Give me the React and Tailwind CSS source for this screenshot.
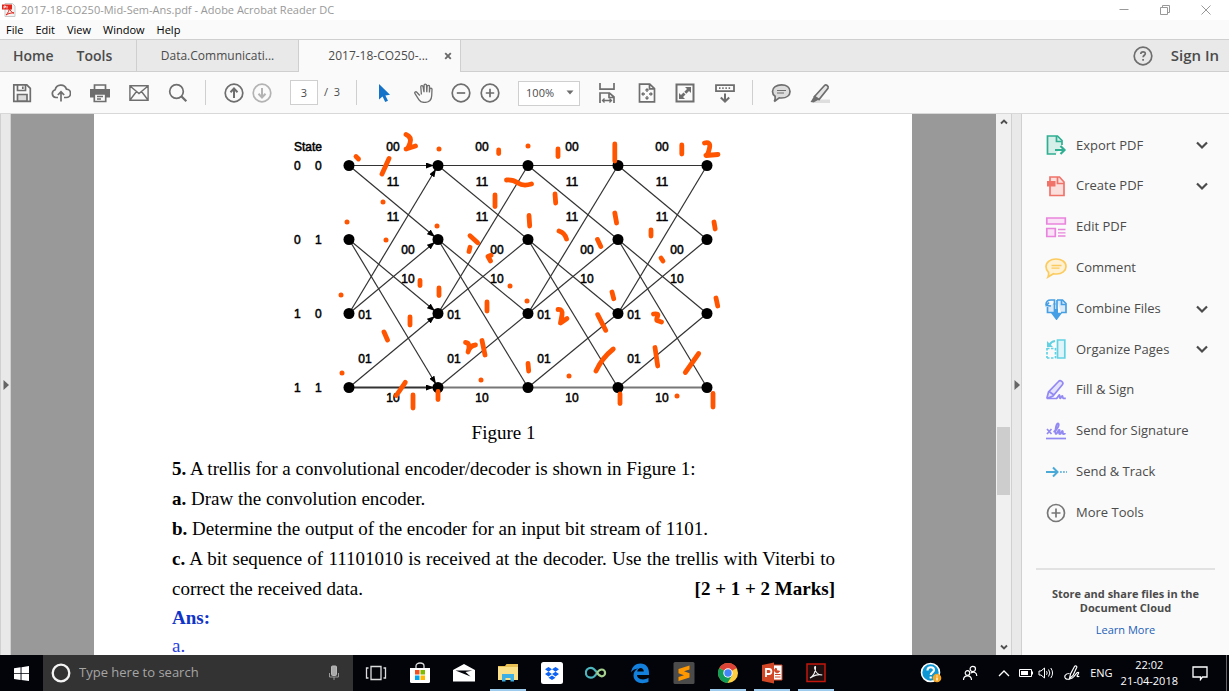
import React from "react";

const Icon = ({ size = "size-5", box = "0 0 20 20", children }) => (
  <svg viewBox={box} className={`${size} shrink-0`} fill="none" stroke="currentColor" strokeWidth="1.7" aria-hidden="true">
    {children}
  </svg>
);

const ToolButton = ({ label, className = "", children }) => (
  <button type="button" aria-label={label} className={`flex size-5 shrink-0 items-center justify-center text-[#6e6e6e] ${className}`}>
    <Icon>{children}</Icon>
  </button>
);

/* ---------- window chrome ---------- */

function TitleBar() {
  return (
    <header className="flex h-5 shrink-0 items-center bg-white pr-[3px] text-[#999]">
      <svg viewBox="0 0 14 14" className="ml-0.5 h-3.5 w-3.5" aria-hidden="true">
        <path d="M3 .5h7.500L13 3v10.500H3z" fill="#f4f4f4" stroke="#c9c9c9" />
        <path d="M0 1.500h10v5H0z" fill="#e0251b" />
        <path d="M4 12c2-2 3.500-5 3.300-7 .7 3 2.500 4.500 4.700 5-2.500-.3-5.500.3-8 2z" fill="none" stroke="#e0251b" />
        <path d="M2 5.500V3h1.500v1.300H2M5 3v2.500" stroke="#fff" strokeWidth=".8" fill="none" />
      </svg>
      <h1 className="ml-[5px] text-[11px] leading-5">2017-18-CO250-Mid-Sem-Ans.pdf - Adobe Acrobat Reader DC</h1>
      <div className="ml-auto flex">
        <button type="button" aria-label="Minimize" className="flex h-5 w-[41px] items-center justify-center">
          <Icon size="size-3" box="0 0 12 12"><path d="M1.500 5.500h9" strokeWidth="1" /></Icon>
        </button>
        <button type="button" aria-label="Restore" className="flex h-5 w-[41px] items-center justify-center">
          <Icon size="size-3" box="0 0 12 12"><path d="M1.500 3.500h7v7h-7zM3.500 3.500v-2h7v7h-2" strokeWidth="1" /></Icon>
        </button>
        <button type="button" aria-label="Close" className="flex h-5 w-[41px] items-center justify-center">
          <Icon size="size-3" box="0 0 12 12"><path d="M1.500 1.500l9 9M10.500 1.500l-9 9" strokeWidth="1" /></Icon>
        </button>
      </div>
    </header>
  );
}

function MenuBar() {
  return (
    <nav className="flex h-[19px] shrink-0 items-center gap-3 bg-[#fafafa] px-1.5 text-[11px] leading-4 text-black">
      {["File", "Edit", "View", "Window", "Help"].map((m) => (
        <button type="button" key={m}>{m}</button>
      ))}
    </nav>
  );
}

function TabBar() {
  return (
    <div className="flex h-[33px] shrink-0 border-t border-[#cfcfcf] bg-[#e9e9e9] text-[#4b4b4b]">
      <div className="flex w-[137px] items-center gap-[23px] border-r border-b border-[#cfcfcf] pl-[13px] text-sm font-semibold">
        <button type="button">Home</button>
        <button type="button">Tools</button>
      </div>
      <button type="button" className="w-[162px] border-r border-b border-[#cfcfcf] text-xs">Data.Communicati...</button>
      <div className="flex w-[162px] items-center justify-end border-r border-[#cfcfcf] bg-[#fafafa] pr-2 text-xs">
        <button type="button">2017-18-CO250-...</button>
        <button type="button" aria-label="Close tab" className="ml-4 text-[#6a6a6a]">
          <Icon size="size-2" box="0 0 8 8"><path d="M1.200 1.200l5.600 5.600M6.800 1.200L1.200 6.800" strokeWidth="1.900" /></Icon>
        </button>
      </div>
      <div className="flex grow items-center justify-end gap-[18px] border-b border-[#cfcfcf] pr-2.5">
        <button type="button" aria-label="Help" className="text-[#6e6e6e]">
          <Icon>
            <circle cx="10" cy="10" r="8.800" />
            <path d="M7.800 8c0-3 4.600-2.800 4.500-.3 0 1.500-2.200 1.700-2.200 3.600M10.100 12.900v1.800" />
          </Icon>
        </button>
        <button type="button" className="text-[15px] font-semibold">Sign In</button>
      </div>
    </div>
  );
}

function Toolbar() {
  return (
    <div className="flex h-[42px] shrink-0 items-center border-b border-[#d8d8d8] bg-[#fafafa] text-[#4b4b4b]">
      <div className="flex h-[25px] items-center gap-[19px] border-r border-[#cfcfcf] pr-[17px] pl-3">
        <ToolButton label="Save">
          <path d="M1.800 1.800h13l3.500 3.500v13H1.800z" />
          <path d="M5.500 2v5.500h8V2M10.800 3.500v2.500" />
          <path d="M5.500 18v-6.500h9.500V18z" fill="#dcdcdc" />
        </ToolButton>
        <ToolButton label="Upload to cloud">
          <path d="M7 14.500H4.800a4 4 0 0 1-.6-7.800 5.800 5.800 0 0 1 11.200-.6 4.200 4.200 0 0 1-.2 8.400H13M10 18.500V9M6.800 12L10 8.800l3.200 3.200" />
        </ToolButton>
        <ToolButton label="Print">
          <path d="M4.500 6V2h11v4" />
          <path d="M0 6h20v8.500h-4v-3H4v3H0z" fill="currentColor" stroke="none" />
          <path d="M4.300 11h11.400v7.500H4.300z" fill="#fafafa" />
          <path d="M7 13.500h6M7 16h4" strokeWidth="1.300" />
        </ToolButton>
        <ToolButton label="Email">
          <path d="M.9 2.800h18.200v14.400H.9zM1 3l9 7.500L19 3M1 17l6.500-8.500M19 17l-6.500-8.500" strokeWidth="1.400" />
        </ToolButton>
        <ToolButton label="Find">
          <circle cx="8.500" cy="8.500" r="6.800" />
          <path d="M13.300 13.300l5 5" strokeWidth="2.300" />
        </ToolButton>
      </div>
      <div className="flex h-[25px] items-center border-r border-[#cfcfcf] pr-4 pl-[18px]">
        <ToolButton label="Previous page">
          <circle cx="10" cy="10" r="8.800" />
          <path d="M10 15V6M6.500 9.200L10 5.500l3.500 3.700" strokeWidth="2" />
        </ToolButton>
        <ToolButton label="Next page" className="ml-2 opacity-50">
          <circle cx="10" cy="10" r="8.800" />
          <path d="M10 5v9M6.500 10.800l3.500 3.700 3.500-3.700" strokeWidth="2" />
        </ToolButton>
        <input aria-label="Page number" defaultValue="3" className="ml-[18px] h-[25px] w-7 border border-[#cfcfcf] bg-white text-center text-[11px]" />
        <span className="ml-1.5 text-[11px] whitespace-pre">/  3</span>
      </div>
      <div className="flex h-[25px] items-center border-r border-[#cfcfcf] px-[17px]">
        <ToolButton label="Select">
          <path d="M5 1v15.500l3.600-3 2.600 5.500 2.800-1.300-2.600-5.300 4.600-.6z" fill="#1473c9" stroke="none" />
        </ToolButton>
        <ToolButton label="Hand" className="ml-5">
          <path d="M5.800 12.500L2.800 9.200c-1-1-2.600.2-1.800 1.400l4 6.200c1.200 1.900 2.800 2.600 5.500 2.600 4.500 0 7-2.600 7.200-6.700l.3-6.500c0-1.500-2.100-1.500-2.300-.1l-.3 3.400.1-6c0-1.600-2.400-1.600-2.400 0l-.3 5.800-.3-7c0-1.600-2.400-1.600-2.400 0l-.1 6.900-.9-5.600C8.800 2.100 6.600 2.400 6.800 4l.6 7.500" strokeWidth="1.300" />
        </ToolButton>
        <ToolButton label="Zoom out" className="ml-[17px]">
          <circle cx="10" cy="10" r="8.800" /><path d="M5.800 10h8.400" />
        </ToolButton>
        <ToolButton label="Zoom in" className="ml-[9px]">
          <circle cx="10" cy="10" r="8.800" /><path d="M5.800 10h8.400M10 5.800v8.400" />
        </ToolButton>
        <div className="relative ml-[18px]">
          <select aria-label="Zoom level" className="h-[25px] w-[62px] appearance-none border border-[#cfcfcf] bg-white pl-[7px] text-[11px]">
            <option>100%</option>
          </select>
          <svg viewBox="0 0 8 5" className="pointer-events-none absolute top-[11px] right-1.5 h-[5px] w-2" aria-hidden="true"><path d="M.5.500h7L4 4.500z" fill="#6e6e6e" /></svg>
        </div>
        <ToolButton label="Fit width" className="ml-[17px]">
          <path d="M3 0v6.200h14V0M3 20v-10h9.500l4.500 4V20M12 10v4.500h5" />
          <path d="M5.500 17.500h9M7.500 15.500l-2 2 2 2M12.500 15.500l2 2-2 2" strokeWidth="1.300" />
        </ToolButton>
        <ToolButton label="Fit page" className="ml-5">
          <path d="M2.500 1.200h10.300l4.700 4.300v13.300h-15zM12.500 1.200v4.600h5" />
          <path d="M10 6v3M10 13v3M5 11h3M12 11h3" strokeWidth="1.300" />
          <path d="M8.500 7.500L10 6l1.500 1.500M8.500 14.500l1.500 1.500 1.500-1.500M6.500 9.500L5 11l1.500 1.500M13.500 9.500L15 11l-1.500 1.500" strokeWidth="1.300" />
        </ToolButton>
        <ToolButton label="Full screen" className="ml-[18px]">
          <path d="M1.500 1.500h17v17h-17z" strokeWidth="2" />
          <path d="M10 4h6v6l-2-2-2.700 2.700-2-2L12 6zM10 16H4v-6l2 2 2.500-2.500 2 2L8 14z" fill="currentColor" stroke="none" />
        </ToolButton>
        <ToolButton label="Scrolling mode" className="ml-5">
          <path d="M1 2.200h18v6H1z" strokeWidth="1.800" />
          <path d="M4 5.200h12" strokeDasharray="1.500 1.700" />
          <path d="M10 10.500v8M5.800 14.500l4.200 4 4.200-4" strokeWidth="2" />
        </ToolButton>
      </div>
      <div className="flex h-[25px] items-center gap-[19px] pl-[18px]">
        <ToolButton label="Add comment">
          <path d="M10.500 1.800c5 0 8.500 2.600 8.500 6.600s-3.500 6.600-8.500 6.600c-.9 0-1.500 0-2.300-.2L3.300 18.500c.8-1.400 1.100-3 .8-5.200C2.300 12 1.500 10.300 1.500 8.400c0-4 4-6.600 9-6.600z" fill="#dcdcdc" />
          <path d="M6 7.500h9M6 10h7" strokeWidth="1.200" />
        </ToolButton>
        <ToolButton label="Highlight">
          <path d="M6 16.500h14v3.500H3z" fill="#dedede" stroke="none" />
          <path d="M4.500 13.500L14.500 2.500c1.500-1.500 4.500.5 3.500 2.700L9 16.500z" fill="#e4e4e4" />
          <path d="M4.500 12.500L.5 19l3 .5 5.500-3z" fill="currentColor" stroke="none" />
        </ToolButton>
      </div>
    </div>
  );
}

/* ---------- document ---------- */

const COLS = [349, 438, 528, 618, 707];
const ROWS = [165, 239, 313, 387];
const EDGES = [[0, 0], [0, 1], [1, 2], [1, 3], [2, 0], [2, 1], [3, 2], [3, 3]];
const LABELS = [
  ["00", 44, 151], ["11", 44, 186], ["11", 44, 221], ["00", 59, 254],
  ["10", 59, 283], ["01", 16, 319], ["01", 16, 363], ["10", 44, 402],
];
const STATES = [["0", "0"], ["0", "1"], ["1", "0"], ["1", "1"]];
const DOTS = [
  [439, 149], [383, 202], [347, 222], [386, 240], [437, 226], [528, 146], [341, 295],
  [342, 373], [481, 380], [510, 286], [527, 301], [569, 376], [677, 396],
];
const STROKES = [
  "M406 134.500Q412 137 410 143T406 149L415.500 146", "M356 156.500l2.500 2.500", "M389 158.500L382 174",
  "M498.700 150v3.500", "M495 195v11.500", "M470 235.700l7.700 7", "M470 247.300l-1 4.200", "M491 255.300l-3 1.200 2.500 4.500",
  "M558 149v7.500", "M614.800 144v17", "M681.800 145v9", "M704.500 143Q711 141.500 709.500 148T706 155.500L718 154.500",
  "M506.500 180Q513 179.500 518 183T531.500 184", "M555 194l.7 9", "M529 215.500l.7 10.500", "M559 231Q565 233 566.500 239",
  "M614.800 213l1.800 10", "M597.500 239.500l3.300 7", "M651 230v6", "M661 258l2 3", "M714 222l1.200 7",
  "M420 280.500v5", "M439 288v7.500", "M487 302v9", "M410 317v8", "M384 332l3.500 8", "M405.300 382.300L396.300 395.500",
  "M413 395v13", "M438 391.500v8", "M465.500 342.500Q471 343 468 352Q470 345.500 475.500 345", "M482 340.500L485 355",
  "M558 309.500Q563 309 562 315L560.500 323L567 318.500", "M612 292l1.700 6.700", "M597.700 314.700l8 15.600",
  "M653.500 314Q659 313 657.500 316.500T657 320.500L661.500 322", "M716 298l1.700 8", "M528 363.500l.7 7.500",
  "M613.300 349Q602 358 596 371", "M655 347.500l2.700 18.500", "M698.700 353.500L685.300 372.500", "M620 394v9.500", "M713 393.500v13.500",
];

function Trellis() {
  const edges = [];
  for (let c = 0; c < 4; c++) {
    EDGES.forEach(([from, to]) => {
      edges.push(
        <line
          key={`${c}${from}${to}`}
          x1={COLS[c]} y1={ROWS[from] + 0.5} x2={COLS[c + 1]} y2={ROWS[to] + 0.5}
          stroke={from === 3 && to === 3 && c > 0 ? "#777" : "#333"}
          strokeWidth={from === 3 && to === 3 ? 2 : 1.2}
          markerEnd={c === 0 ? "url(#arrow)" : undefined}
        />
      );
    });
  }
  return (
    <svg viewBox="94 114 818 300" className="w-full max-w-[818px]" role="img" aria-label="Trellis diagram">
      <defs>
        <marker id="arrow" viewBox="0 0 8 6" markerWidth="8" markerHeight="6" refX="12" refY="3" orient="auto" markerUnits="userSpaceOnUse">
          <path d="M0 0l8 3-8 3z" fill="#000" />
        </marker>
      </defs>
      {edges}
      {COLS.map((x) => ROWS.map((y) => <circle key={`${x}${y}`} cx={x} cy={y + 0.5} r="5.500" fill="#000" />))}
      <g fill="#000" stroke="#000" strokeWidth=".5" fontSize="12" fontFamily="'Liberation Sans', Arial, sans-serif">
        <text x="294" y="151">State</text>
        {STATES.map(([a, b], i) => (
          <React.Fragment key={i}>
            <text x="294" y={ROWS[i] + 5}>{a}</text>
            <text x="315" y={ROWS[i] + 5}>{b}</text>
          </React.Fragment>
        ))}
        {COLS.slice(0, 4).map((x) =>
          LABELS.map(([t, dx, y]) => (
            <text key={`${x}${y}`} x={x + dx} y={y} textAnchor="middle">{t}</text>
          ))
        )}
      </g>
      <g fill="none" stroke="#ff5500" strokeWidth="4.800" strokeLinecap="round" strokeLinejoin="round">
        {STROKES.map((d) => <path key={d} d={d} />)}
      </g>
      {DOTS.map(([x, y]) => <circle key={`${x}-${y}`} cx={x} cy={y} r="2.500" fill="#ff5500" />)}
    </svg>
  );
}

function Page() {
  return (
    <article className="w-full max-w-[818px] overflow-hidden bg-white font-['Liberation_Serif',serif] text-[19px] leading-[30px] text-black">
      <Trellis />
      <div className="pr-[77px] pl-[78px]">
        <p className="mt-1 mb-1.5 text-center">Figure 1</p>
        <p><b>5.</b> A trellis for a convolutional encoder/decoder is shown in Figure 1:</p>
        <p><b>a.</b> Draw the convolution encoder.</p>
        <p><b>b.</b> Determine the output of the encoder for an input bit stream of 1101.</p>
        <p className="text-justify [text-align-last:justify]"><b>c.</b> A bit sequence of 11101010 is received at the decoder. Use the trellis with Viterbi to</p>
        <p className="flex justify-between"><span>correct the received data.</span><b>[2 + 1 + 2 Marks]</b></p>
        <p className="leading-7 font-bold text-[#1034c8]">Ans:</p>
        <p className="leading-7 text-[#2a3fe0]">a.</p>
      </div>
    </article>
  );
}

function Scrollbar() {
  return (
    <div className="flex w-[15px] shrink-0 flex-col items-center bg-[#f0f0f0] text-[#505050]">
      <button type="button" aria-label="Scroll up" className="flex h-4 items-center">
        <Icon size="size-2" box="0 0 8 8"><path d="M1 5.500l3-3 3 3" strokeWidth="1.900" /></Icon>
      </button>
      <div className="grow-[297]" />
      <div className="h-[68px] w-[13px] bg-[#cdcdcd]" />
      <div className="grow-[144]" />
      <button type="button" aria-label="Scroll down" className="flex h-4 items-center">
        <Icon size="size-2" box="0 0 8 8"><path d="M1 2.500l3 3 3-3" strokeWidth="1.900" /></Icon>
      </button>
    </div>
  );
}

const PaneToggle = ({ label }) => (
  <button type="button" aria-label={label} className="flex w-[11px] shrink-0 items-center justify-center border-x border-[#d0d0d0] bg-[#e9e9e9]">
    <svg viewBox="0 0 6 10" className="h-2.5 w-1.5" aria-hidden="true"><path d="M.5 0v10L6 5z" fill="#666" /></svg>
  </button>
);

/* ---------- tools pane ---------- */

const TOOLS = [
  ["Export PDF", true, "text-[#2fae91]", <>
    <path d="M11 20H2.500V2h10L17 6.500V11" fill="#d7efe9" /><path d="M11.500 2v5.500H17" />
    <path d="M10 16h9M15.500 12l4 4-4 4" strokeWidth="2.200" />
  </>],
  ["Create PDF", true, "text-[#f0736a]", <>
    <path d="M5 10v10.500h14V7l-4.500-5H5v4" fill="#fbdfdc" /><path d="M12.500 2v6.500H19" />
    <path d="M2 6h8.500v5.500H2z" fill="currentColor" stroke="none" />
  </>],
  ["Edit PDF", false, "text-[#e985dd]", <>
    <path d="M1.800 2h18.500v6H1.800zM1.800 12.500h8.500v8H1.800z" fill="#fae3f7" />
    <path d="M13 13.500h7.500M13 16.800h7.500M13 20h7.500" strokeWidth="1.300" />
  </>],
  ["Comment", false, "text-[#fbcb5f]", <>
    <path d="M11 2c5.500 0 10 3 10 7.500S17 17 11.500 17c-1 0-2 0-3-.3L3 20c.6-1.500.8-3 .5-4.700C1.800 13.800 1 12 1 9.700 1 5 5.500 2 11 2z" fill="#fff1d3" />
    <path d="M6.500 8.500h10M6.500 11.200h8" strokeWidth="1.300" />
  </>],
  ["Combine Files", true, "text-[#459fe4]", <>
    <path d="M9.500 5v9.500H2.500V9M12 2h5.500L21 5.500v9h-5" fill="#dbeaf8" />
    <path d="M1 7c0-3 2-5 5-5h3.500v5M4 4.500L1.500 7.500 6 8M12 14V2M16.500 2v4.500H21" />
    <path d="M7.500 15.500h8L11.500 21z" fill="currentColor" /><path d="M11.500 11v7" strokeWidth="3" />
  </>],
  ["Organize Pages", true, "text-[#62d2e3]", <>
    <path d="M12.500 2h7.300v18h-7.300z" fill="#dff5f9" />
    <path d="M2 10.500h8.500M2 20h8.500M2 10v10M10.500 10v10" strokeDasharray="2.500 1.500" />
    <path d="M2 3v6h6z" fill="currentColor" stroke="none" /><path d="M4.500 7Q6 3.500 10 3" strokeWidth="2" />
  </>],
  ["Fill & Sign", false, "text-[#9289f3]", <>
    <path d="M1.800 19.500L3.500 13 13.500 2.500c1.800-2 5.500.8 4 3L8 17l-6.200 2.500h9.700" fill="#e5e2fd" />
    <path d="M11 19.500c2 0 2.500-4 3.500-3.500s-.5 3.500.8 3.300 1-2.700 2-2.500 0 2.500 1 2.500h2.500M4 12.500l5 3.500" />
  </>],
  ["Send for Signature", false, "text-[#9289f3]", <>
    <path d="M1 18.500h20" /><path d="M2 9l4.500 5M6.500 9L2 14" />
    <path d="M8.500 12c4-2 6.500-8 4.500-8.500S9.500 14 11 14s2.500-5 3.500-4-1.500 4 .3 4 1.700-3.500 2.700-3-.5 3 1 3 1.500-1 1.500-1" strokeWidth="1.900" />
  </>],
  ["Send & Track", false, "text-[#4ba9d8]", <>
    <path d="M1 11h11M8 6.500l4.500 4.500L8 15.500" strokeWidth="2" /><path d="M15 11h7" strokeDasharray="1.800 1.200" strokeWidth="1.500" />
  </>],
  ["More Tools", false, "text-[#777]", <>
    <circle cx="11" cy="11" r="8.500" /><path d="M11 6.500v9M6.500 11h9" />
  </>],
];

function ToolsPane() {
  return (
    <aside className="w-[207px] shrink-0 bg-[#fafafa] pt-[11px] text-[#4b4b4b]">
      <ul className="flex h-[408px] flex-col">
        {TOOLS.map(([name, expandable, color, art]) => (
          <li key={name} className="flex flex-1 items-center pr-5 pl-[23px] text-[13px]">
            <button type="button" className="flex items-center gap-[9px]">
              <span className={color}><Icon size="size-[22px]" box="0 0 22 22">{art}</Icon></span>
              {name}
            </button>
            {expandable && (
              <button type="button" aria-label={`Expand ${name}`} className="ml-auto">
                <Icon size="size-3.5" box="0 0 14 14"><path d="M2 4.500l5 5 5-5" strokeWidth="2.200" /></Icon>
              </button>
            )}
          </li>
        ))}
      </ul>
      <hr className="mx-3.5 mt-[35px] border-t-2 border-[#e2e2e2]" />
      <div className="mt-[17px] text-center text-[11px] leading-[14px]">
        <p className="font-bold">Store and share files in the<br />Document Cloud</p>
        <a href="#learn" className="mt-2 block text-[#1c5fb8]">Learn More</a>
      </div>
    </aside>
  );
}

/* ---------- taskbar ---------- */

const APPS = [
  ["Task view", false, <path d="M6 4.500h10v13H6zM3.500 6H1.500v10h2M18.500 6h2v10h-2" stroke="#ddd" strokeWidth="1.300" fill="none" />],
  ["Store", false, <>
    <path d="M7 6V4c0-4 8-4 8 0v2" fill="none" stroke="#ddd" strokeWidth="1.300" />
    <path d="M1 6h20v13.500a1.500 1.500 0 0 1-1.500 1.500h-17A1.500 1.500 0 0 1 1 19.500z" fill="#fff" />
    <path d="M6 8h4.500v4.500H6z" fill="#f25022" /><path d="M11.500 8H16v4.500h-4.500z" fill="#7fba00" />
    <path d="M6 13.500h4.500V18H6z" fill="#00a4ef" /><path d="M11.500 13.500H16V18h-4.500z" fill="#ffb900" />
  </>],
  ["Mail", false, <path d="M0 8l11-6 11 6v11.500H0zM2.500 8.500l15 6-5-4.500 7-1.500z" fill="#fff" fillRule="evenodd" />],
  ["File Explorer", true, <>
    <path d="M1 4h7l1.500-2H21v16H1z" fill="#e8bf52" /><path d="M1 5h20v13H1z" fill="#fbe08a" />
    <path d="M5 19.500V12h12v7.500h-3.500V16h-5v3.500z" fill="#3cb0e5" />
  </>],
  ["Dropbox", false, <>
    <rect width="22" height="22" rx="2.500" fill="#fff" />
    <path d="M7.500 5l3.500 2.300-3.500 2.400L4 7.300zM14.500 5L18 7.300l-3.500 2.400L11 7.300zM7.500 9.800l3.500 2.300-3.500 2.400L4 12.100zM14.500 9.800l3.500 2.300-3.500 2.400-3.500-2.400zM11 13.500l3.500 2.200L11 18l-3.500-2.300z" fill="#0c62f5" />
  </>],
  ["Infinity", false, <>
    <path d="M12 10.500C9.500 7 8 5.800 5.800 5.800a4.700 4.700 0 0 0 0 9.900c3 0 4.500-1.900 6.200-4.700" fill="none" stroke="#4db5bd" strokeWidth="2.200" />
    <path d="M12 11c1.500-2.500 3-3.500 4.700-3.500a3.400 3.400 0 0 1 0 6.800c-1.700 0-3.200-1.300-4.700-3.800" fill="none" stroke="#a5d08d" strokeWidth="2.200" />
  </>],
  ["Edge", false, <path d="M2 10.500C3 4.500 6.500 1.500 11.500 1.500c5.500 0 8.500 4 8.500 9.500v2H8c.3 5 7.500 5.500 11.500 2.800v3.900C13 23 4.500 20.500 4.500 13.500c0-3.500 2-5.800 4.800-7C5.500 6.700 3.300 8.500 2 10.500zM8.200 9.500h6.600c0-4.800-6-4.800-6.600 0z" fill="#1280dc" />],
  ["Sublime Text", false, <>
    <rect x=".5" y="0" width="21" height="22" rx="1.500" fill="#4b4b4b" />
    <path d="M16.500 3.500v4L11 9.300l5.500 1.900v4.300L5.500 19v-4l5.500-1.800-5.500-2V7z" fill="#ff9800" />
  </>],
  ["Chrome", true, <>
    <circle cx="11" cy="11" r="10" fill="#ffcd42" />
    <path d="M11 11L2.300 6A10 10 0 0 1 19.700 6z" fill="#db4437" />
    <path d="M2.300 6A10 10 0 0 0 10.500 21L15 13.500 11 11z" fill="#0f9d58" />
    <circle cx="11" cy="11" r="4.700" fill="#fff" /><circle cx="11" cy="11" r="3.700" fill="#4285f4" />
  </>],
  ["PowerPoint", true, <>
    <path d="M12 3h9v15h-9z" fill="#fff" stroke="#d24726" />
    <path d="M14 12.500h5.500M14 15h5.500M15 6a2.500 2.500 0 1 0 3.500 3H16z" stroke="#d24726" fill="#d24726" />
    <path d="M1 3l12-2.500v21L1 19z" fill="#d24726" />
    <path d="M5 15V7h3c3.200 0 3.200 5 0 5H5.500" fill="none" stroke="#fff" strokeWidth="1.800" />
  </>],
  ["Acrobat Reader", true, <>
    <path d="M2 2h18v17.500H2z" fill="#1d0f10" stroke="#c3160c" strokeWidth="1.500" />
    <path d="M5 16c3-1.500 6-6 5.500-11-.1-1-1.200-.5-.8 1.500.7 3.500 3.500 6.500 7.500 6.500-3.500-1.300-9 .5-12.200 3z" fill="none" stroke="#f0f0f0" strokeWidth="1.200" />
  </>],
];

function Taskbar() {
  return (
    <footer className="flex h-9 shrink-0 items-stretch bg-[#02040a] text-[11px] text-white">
      <button type="button" aria-label="Start" className="flex w-[43px] items-center justify-center">
        <svg viewBox="0 0 16 16" className="size-[15px]" aria-hidden="true"><path d="M0 2.300l7-1v6.300H0zM8 1.200L16 0v7.600H8zM0 8.500h7v6.300l-7-1zM8 8.500h8V16l-8-1.200z" fill="#fff" /></svg>
      </button>
      <label className="flex w-[310px] items-center bg-[#333] pr-[13px] pl-2">
        <svg viewBox="0 0 20 20" className="size-5" aria-hidden="true"><circle cx="10" cy="10" r="8.300" fill="none" stroke="#f4f4f4" strokeWidth="2.300" /></svg>
        <input aria-label="Search" placeholder="Type here to search" className="ml-2 min-w-0 grow bg-transparent text-[13px] placeholder:text-[#a5a5a5]" />
        <svg viewBox="0 0 12 16" className="h-4 w-3" aria-hidden="true">
          <rect x="3.500" y="1" width="5" height="9.500" rx="1" fill="#aaa" stroke="#bbb" /><path d="M1.500 8v4h9V8M6 12v3" fill="none" stroke="#999" />
        </svg>
      </label>
      <div className="ml-px flex">
        {APPS.map(([name, open, art]) => (
          <button type="button" key={name} aria-label={name} className="flex w-11 flex-col items-center">
            <svg viewBox="0 0 22 22" className="mt-[7px] size-[22px]" aria-hidden="true">{art}</svg>
            {open && <span className="mt-auto h-0.5 w-9 bg-[#9ccbee]" />}
          </button>
        ))}
      </div>
      <div className="ml-auto flex items-center">
        <button type="button" aria-label="Get help">
          <svg viewBox="0 0 22 22" className="size-[22px]" aria-hidden="true">
            <circle cx="10.500" cy="10.500" r="9" fill="#0d96d4" stroke="#fff" strokeWidth="1.600" />
            <path d="M7.500 8.500c0-4.500 6.500-4 6.500-.5 0 2.300-3.300 2.300-3.300 5M10.700 14.500v2" stroke="#fff" strokeWidth="2.200" fill="none" />
            <circle cx="17" cy="16" r="4.300" fill="#f5a623" /><path d="M17 13.500v1M17 15.500v3" stroke="#fff" strokeWidth="1.300" />
          </svg>
        </button>
        <button type="button" aria-label="People" className="ml-5">
          <Icon size="size-4" box="0 0 16 16">
            <g strokeWidth="1.200"><circle cx="5.500" cy="8" r="2.300" /><path d="M1.500 15c0-5.500 8-5.500 8 0" /><circle cx="10.800" cy="4" r="2.700" /><path d="M8.800 8c3-1.800 6-.5 6 3" /></g>
          </Icon>
        </button>
        <button type="button" aria-label="Show hidden icons" className="ml-5">
          <Icon size="size-3" box="0 0 12 12"><path d="M1 9l5-5 5 5" strokeWidth="1.300" /></Icon>
        </button>
        <svg viewBox="0 0 16 12" className="ml-2 h-3 w-4" aria-label="Battery">
          <path d="M1.500 2.500h12v7h-12zM14.500 4.500v3" fill="none" stroke="#fff" /><path d="M3 4h7v4H3z" fill="#fff" />
        </svg>
        <svg viewBox="0 0 16 14" className="ml-1 h-3.5 w-4" fill="none" stroke="#fff" aria-label="Volume">
          <path d="M1 5v4h2l3.500 3V2L3 5zM8.500 5.200q1.400 1.800 0 3.600M10.500 3.500q2.700 3.500 0 7M12.800 2q3.500 5 0 10" />
        </svg>
        <svg viewBox="0 0 16 16" className="ml-2.5 size-4" fill="none" stroke="#fff" strokeWidth="1.200" aria-label="Pen workspace">
          <path d="M5.500 13.500L6.500 9l4-7.500c.9-1.200 2.700-.3 2.200 1L9 10.500z" />
          <path d="M5.500 8.500C1 8.500 0 11.500 1.500 13.500c2 1.500 6.500.5 8.500-2s3.500-5 4.500-4-2.500 3.500-1 4 1.500-.5 1.500-.5" />
        </svg>
        <button type="button" className="ml-2.5">ENG</button>
        <time dateTime="2018-04-21T22:02" className="ml-2 text-center leading-4">22:02<br />21-04-2018</time>
        <button type="button" aria-label="Notifications" className="mr-[18px] ml-3.5">
          <Icon size="size-4" box="0 0 16 16"><path d="M1 2h14v10H10.500L8.500 14.500V12H1z" strokeWidth="1.300" /></Icon>
        </button>
        <span className="h-9 w-[3px] border-l border-[#666]" />
      </div>
    </footer>
  );
}

export default function App() {
  return (
    <div className="flex h-screen flex-col overflow-hidden bg-[#fafafa] font-['Open_Sans','Noto_Sans',sans-serif]">
      <TitleBar />
      <MenuBar />
      <TabBar />
      <Toolbar />
      <div className="flex min-h-0 grow">
        <PaneToggle label="Show navigation pane" />
        <main className="flex min-w-0 grow justify-center bg-[#999] pr-px"><Page /></main>
        <Scrollbar />
        <PaneToggle label="Hide tools pane" />
        <ToolsPane />
      </div>
      <Taskbar />
    </div>
  );
}
